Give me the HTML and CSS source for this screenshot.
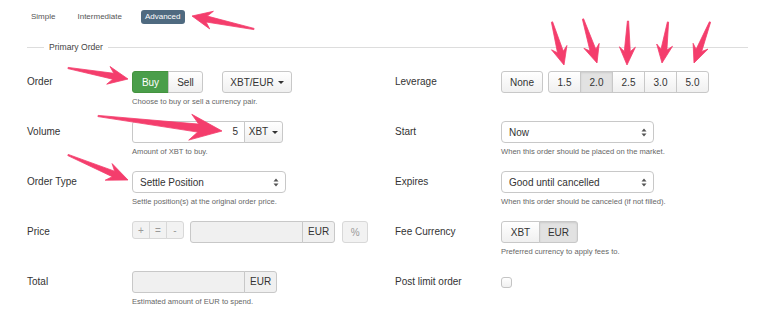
FILE: index.html
```html
<!DOCTYPE html>
<html lang="en">
<head>
  <meta charset="UTF-8">
  <title>New Order - Advanced</title>
  <link rel="stylesheet" href="styles.css">
</head>
<body>

  <div class="page">
    <nav class="modes">
      <a>Simple</a>
      <a>Intermediate</a>
      <a class="active">Advanced</a>
    </nav>

    <div class="section-title"><span>Primary Order</span></div>

    <div class="cols">
      <div class="col">
        <div class="row">
          <label>Order</label>
          <div class="field">
            <div class="controls">
              <div class="btn-group">
                <button class="btn btn-success">Buy</button>
                <button class="btn">Sell</button>
              </div>
              <button class="btn pair">XBT/EUR <span class="caret"></span></button>
            </div>
            <div class="help">Choose to buy or sell a currency pair.</div>
          </div>
        </div>

        <div class="row">
          <label>Volume</label>
          <div class="field">
            <div class="input-group">
              <div class="input num">5</div>
              <button class="btn addon-btn">XBT <span class="caret"></span></button>
            </div>
            <div class="help">Amount of XBT to buy.</div>
          </div>
        </div>

        <div class="row">
          <label>Order Type</label>
          <div class="field">
            <div class="select wide">
              <span>Settle Position</span>
              <svg width="6" height="9" viewBox="0 0 6 9"><path d="M3 0.5L5.5 3.5H0.5Z M3 8.5L5.5 5.5H0.5Z" fill="#555"/></svg>
            </div>
            <div class="help">Settle position(s) at the original order price.</div>
          </div>
        </div>

        <div class="row">
          <label>Price</label>
          <div class="field">
            <div class="controls price">
              <div class="btn-group small">
                <button class="btn disabled">+</button>
                <button class="btn disabled">=</button>
                <button class="btn disabled">-</button>
              </div>
              <div class="input-group">
                <div class="input disabled"></div>
                <span class="addon">EUR</span>
              </div>
              <button class="btn disabled pct">%</button>
            </div>
          </div>
        </div>

        <div class="row">
          <label>Total</label>
          <div class="field">
            <div class="input-group">
              <div class="input disabled"></div>
              <span class="addon">EUR</span>
            </div>
            <div class="help">Estimated amount of EUR to spend.</div>
          </div>
        </div>
      </div>

      <div class="col">
        <div class="row">
          <label>Leverage</label>
          <div class="field">
            <div class="controls">
              <button class="btn none">None</button>
              <div class="btn-group lev">
                <button class="btn">1.5</button>
                <button class="btn active">2.0</button>
                <button class="btn">2.5</button>
                <button class="btn">3.0</button>
                <button class="btn">5.0</button>
              </div>
            </div>
          </div>
        </div>

        <div class="row">
          <label>Start</label>
          <div class="field">
            <div class="select">
              <span>Now</span>
              <svg width="6" height="9" viewBox="0 0 6 9"><path d="M3 0.5L5.5 3.5H0.5Z M3 8.5L5.5 5.5H0.5Z" fill="#555"/></svg>
            </div>
            <div class="help">When this order should be placed on the market.</div>
          </div>
        </div>

        <div class="row">
          <label>Expires</label>
          <div class="field">
            <div class="select">
              <span>Good until cancelled</span>
              <svg width="6" height="9" viewBox="0 0 6 9"><path d="M3 0.5L5.5 3.5H0.5Z M3 8.5L5.5 5.5H0.5Z" fill="#555"/></svg>
            </div>
            <div class="help">When this order should be canceled (if not filled).</div>
          </div>
        </div>

        <div class="row">
          <label>Fee Currency</label>
          <div class="field">
            <div class="btn-group fee">
              <button class="btn">XBT</button>
              <button class="btn active">EUR</button>
            </div>
            <div class="help">Preferred currency to apply fees to.</div>
          </div>
        </div>

        <div class="row">
          <label>Post limit order</label>
          <div class="field">
            <span class="checkbox"></span>
          </div>
        </div>
      </div>
    </div>

    <svg class="arrows" id="arrows" width="761" height="320"></svg>
  </div>

  <script src="arrows.js"></script>
</body>
</html>
```

FILE: styles.css
```css
:root {
  --text: #333;
  --muted: #666;
  --border: #c8c8c8;
  --success: #4a9e4a;
  --slate: #4f6a80;
}

body {
  margin: 0;
  font-family: 'Liberation Sans', Arial, sans-serif;
  color: var(--text);
  background-color: #fff;
}

.page {
  position: relative;
  width: 761px;
  height: 320px;
  padding: 10px 13px 0 27px;
  box-sizing: border-box;
  overflow: hidden;
}

.modes {
  display: flex;
  align-items: center;
  height: 14px;
  padding-left: 1px;
  font-size: 8px;
  color: #555;
}

.modes a {
  margin-right: 16px;
  padding: 0 3px;
  line-height: 14px;
}

.modes a.active {
  background-color: var(--slate);
  color: #fff;
  border-radius: 3px;
  padding: 0 4px;
}

.section-title {
  display: flex;
  align-items: center;
  margin-top: 17px;
  height: 12px;
  font-size: 8.6px;
  color: #444;
}

.section-title::before,
.section-title::after {
  content: '';
  height: 1px;
  background-color: #ddd;
}

.section-title::before {
  width: 17px;
}

.section-title::after {
  flex: 1;
}

.section-title span {
  padding: 0 5px;
}

.cols {
  display: grid;
  grid-template-columns: 368px 1fr;
  margin-top: 18px;
}

.row {
  display: grid;
  grid-template-columns: 105px 1fr;
  height: 50px;
}

.col + .col .row {
  grid-template-columns: 106px 1fr;
}

.row label {
  font-size: 10px;
  line-height: 22px;
}

.help {
  margin-top: 4px;
  font-size: 7.6px;
  line-height: 9px;
  color: var(--muted);
}

.controls {
  display: flex;
  align-items: flex-start;
}

.btn {
  display: inline-flex;
  align-items: center;
  justify-content: center;
  white-space: nowrap;
  height: 22px;
  padding: 0 8px;
  font-family: inherit;
  font-size: 10px;
  color: var(--text);
  background: linear-gradient(#fff, #f0f0f0);
  border: 1px solid var(--border);
  border-radius: 3px;
  box-sizing: border-box;
}

.btn-group {
  display: flex;
}

.btn-group .btn {
  border-radius: 0;
  margin-left: -1px;
}

.btn-group .btn:first-child {
  border-radius: 3px 0 0 3px;
  margin-left: 0;
}

.btn-group .btn:last-child {
  border-radius: 0 3px 3px 0;
}

.btn.active {
  background: #e2e2e2;
  box-shadow: inset 0 1px 2px rgba(0,0,0,0.1);
}

.btn-success {
  background: var(--success);
  border-color: #44933f;
  color: #fff;
}

.btn-group .btn-success {
  width: 37px;
}

.btn-group .btn-success + .btn {
  width: 35px;
}

.pair {
  width: 70px;
  margin-left: 19px;
  padding: 0;
}

.caret {
  display: inline-block;
  margin-left: 4px;
  border-top: 3px solid #333;
  border-left: 3px solid transparent;
  border-right: 3px solid transparent;
}

.input-group {
  display: flex;
}

.input {
  width: 113px;
  height: 22px;
  padding: 0 6px;
  font-size: 10px;
  line-height: 20px;
  border: 1px solid var(--border);
  border-radius: 3px 0 0 3px;
  background-color: #fff;
  box-sizing: border-box;
}

.input.num {
  text-align: right;
}

.input.disabled {
  background-color: #f0f0f0;
}

.addon,
.addon-btn {
  height: 22px;
  margin-left: -1px;
  padding: 0 5px;
  font-size: 10px;
  line-height: 20px;
  border: 1px solid var(--border);
  border-radius: 0 3px 3px 0;
  box-sizing: border-box;
}

.addon {
  background-color: #f0f0f0;
}

.addon-btn {
  width: 39px;
  padding: 0;
}

.select {
  display: flex;
  align-items: center;
  justify-content: space-between;
  width: 153px;
  height: 22px;
  padding: 0 6px 0 7px;
  font-size: 10px;
  border: 1px solid var(--border);
  border-radius: 4px;
  background-color: #fff;
  box-sizing: border-box;
}

.select.wide {
  width: 154px;
}

.btn-group.small .btn {
  width: 18px;
  height: 18px;
  padding: 0;
  font-size: 10px;
}

.btn.disabled {
  color: #999;
  background: #f2f2f2;
  border-color: #d8d8d8;
}

.price .input-group {
  margin-left: 6px;
}

.pct {
  width: 26px;
  margin-left: 7px;
  padding: 0;
}

.none {
  width: 42px;
  padding: 0;
}

.lev {
  margin-left: 5px;
}

.lev .btn {
  width: 33px;
  padding: 0;
}

.fee .btn {
  width: 39px;
  padding: 0;
}

.checkbox {
  display: block;
  width: 9px;
  height: 9px;
  margin-top: 6px;
  border: 1px solid #c4c4c4;
  border-radius: 3px;
  background: linear-gradient(#fff, #f0f0f0);
}

.arrows {
  position: absolute;
  left: 0;
  top: 0;
  pointer-events: none;
}
```

FILE: arrows.js
```js
const svg = document.getElementById('arrows');

// tail x, tail y, tip x, tip y, head length, head half-width, shaft half-width
const arrows = [
  [254, 29, 192, 16, 20, 9, 3],
  [68, 68, 128, 79, 20, 9, 3],
  [98, 116, 222, 131, 32, 13, 4],
  [68, 155, 128, 180, 21, 9, 3],
  [552, 22, 564, 65, 18, 8, 3],
  [583, 19, 597, 63, 18, 8, 3],
  [628, 21, 627, 65, 18, 8, 3],
  [668, 22, 662, 63, 18, 8, 3],
  [710, 22, 694, 63, 18, 8, 3]
];

function arrowPoints([tx, ty, px, py, head, wing, shaft]) {
  const len = Math.hypot(px - tx, py - ty);
  const dx = (px - tx) / len, dy = (py - ty) / len;
  const nx = -dy, ny = dx;
  const bx = px - dx * head, by = py - dy * head;
  const sx = px - dx * head * 0.75, sy = py - dy * head * 0.75;
  const pts = [
    [tx + nx * 0.6, ty + ny * 0.6],
    [sx + nx * shaft, sy + ny * shaft],
    [bx + nx * wing, by + ny * wing],
    [px, py],
    [bx - nx * wing, by - ny * wing],
    [sx - nx * shaft, sy - ny * shaft],
    [tx - nx * 0.6, ty - ny * 0.6]
  ];
  return pts.map(p => p[0].toFixed(1) + ',' + p[1].toFixed(1)).join(' ');
}

arrows.forEach(a => {
  const poly = document.createElementNS('http://www.w3.org/2000/svg', 'polygon');
  poly.setAttribute('points', arrowPoints(a));
  poly.setAttribute('fill', '#f43d6c');
  poly.setAttribute('stroke', '#f43d6c');
  poly.setAttribute('stroke-width', '0.8');
  poly.setAttribute('stroke-linejoin', 'round');
  svg.appendChild(poly);
});
```
